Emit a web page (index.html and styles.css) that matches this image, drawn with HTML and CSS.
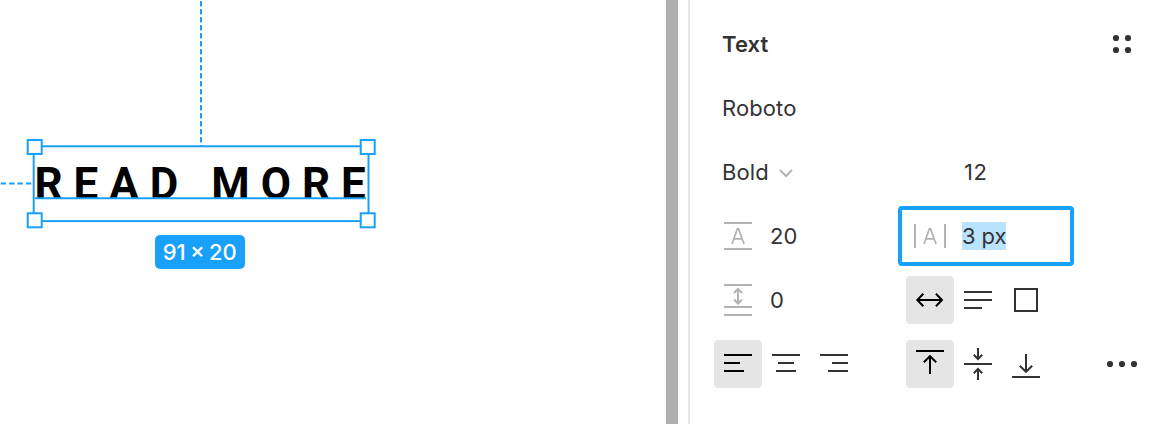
FILE: index.html
```html
<!DOCTYPE html>
<html lang="en">
<head>
<meta charset="utf-8">
<title>Text properties</title>
<link rel="stylesheet" href="styles.css">
</head>
<body>
<div class="app">
  <main class="canvas">
    <svg class="guides" width="666" height="424" fill="none" stroke="#18a0fb" stroke-width="2">
      <path d="M201 1V146" stroke-dasharray="5.5 2.5"/>
      <path d="M0.7 183.6H34" stroke-dasharray="5.4 3"/>
    </svg>
    <div class="layer-text">READ MORE</div>
    <svg class="guides" width="666" height="424" fill="#fff" stroke="#18a0fb" stroke-width="2">
      <path d="M35 198.3H366"/>
      <rect x="33.7" y="146.3" width="334.8" height="74.8" fill="none"/>
      <rect x="27.7" y="140" width="14" height="14"/>
      <rect x="360.7" y="140" width="14" height="14"/>
      <rect x="27.7" y="213.3" width="14" height="14"/>
      <rect x="360.7" y="213.3" width="14" height="14"/>
    </svg>
    <div class="size-badge">91 × 20</div>
  </main>
  <div class="scrollbar"></div>
  <aside class="panel">
    <div class="row">
      <h2 class="label wide title">Text</h2>
      <svg class="icon last" viewBox="0 0 48 48" fill="#333"><circle cx="18" cy="18" r="3.1"/><circle cx="30" cy="18" r="3.1"/><circle cx="18" cy="30" r="3.1"/><circle cx="30" cy="30" r="3.1"/></svg>
    </div>
    <div class="row"><span class="label wide">Roboto</span></div>
    <div class="row">
      <span class="label wide">Bold<svg class="chevron" width="14" height="10" viewBox="0 0 14 10"><path d="M1 1L7 7L13 1"/></svg></span>
      <span class="label size">12</span>
    </div>
    <div class="row">
      <svg class="icon muted" viewBox="0 0 48 48"><path d="M10 11H38M10 37H38"/><path class="thin" d="M18 32L23.4 16.8H24.6L30 32M19.8 26.8H28.2"/></svg>
      <span class="label value">20</span>
      <div class="field">
        <svg class="icon muted" viewBox="0 0 48 48"><path d="M9 12V36M39 12V36"/><path class="thin" d="M18 32L23.4 16.8H24.6L30 32M19.8 26.8H28.2"/></svg>
        <span class="selected">3 px</span>
      </div>
    </div>
    <div class="row">
      <svg class="icon muted" viewBox="0 0 48 48"><path d="M10 9H38M10 31H38M10 39H38M24 13V27M20 17L24 13L28 17M20 23.5L24 27.5L28 23.5"/></svg>
      <span class="label value">0</span>
      <svg class="icon second active" viewBox="0 0 48 48"><path d="M11.5 24H36M17.3 17.7L11.3 24L17.3 30.3M29.9 17.7L36 24L29.9 30.3"/></svg>
      <svg class="icon" viewBox="0 0 48 48"><path d="M10 16H38M10 24H38M10 32H28"/></svg>
      <svg class="icon" viewBox="0 0 48 48"><path d="M13 13H35V35H13Z"/></svg>
    </div>
    <div class="row">
      <svg class="icon active" viewBox="0 0 48 48"><path d="M10 15H38M10 23H26M10 31H30"/></svg>
      <svg class="icon" viewBox="0 0 48 48"><path d="M10 15H38M16 23H32M14 31H34"/></svg>
      <svg class="icon" viewBox="0 0 48 48"><path d="M10 15H38M22 23H38M18 31H38"/></svg>
      <svg class="icon second active" viewBox="0 0 48 48"><path d="M10 11H38M24 34V16.2M17.8 22.2L24 16.2L30.2 22.2"/></svg>
      <svg class="icon" viewBox="0 0 48 48"><path d="M10 24H38M24 8V19M19.8 14.8L24 19L28.2 14.8M24 40V29M19.8 33.2L24 29L28.2 33.2"/></svg>
      <svg class="icon" viewBox="0 0 48 48"><path d="M10 37H38M24 14V31.8M17.8 25.8L24 31.8L30.2 25.8"/></svg>
      <svg class="icon last" viewBox="0 0 48 48" fill="#333"><circle cx="12" cy="24" r="3.1"/><circle cx="24" cy="24" r="3.1"/><circle cx="36" cy="24" r="3.1"/></svg>
    </div>
  </aside>
</div>
</body>
</html>
```
FILE: styles.css
```css
* { box-sizing: border-box; }
body { margin: 0; background: #fff; font-family: Inter, sans-serif; font-size: 22px; color: #333; }
.app { display: flex; height: 424px; overflow: hidden; }
.canvas { position: relative; width: 666px; }
.guides { position: absolute; top: 0; left: 0; }
.layer-text {
  position: absolute; left: 34.5px; top: 147px;
  font: 700 43.9px/74px Roboto, sans-serif;
  letter-spacing: 11px; white-space: nowrap; color: #000;
}
.size-badge {
  position: absolute; left: 154.5px; top: 234.5px; width: 90.5px; height: 34px;
  border-radius: 5px; background: #18a0fb; color: #fff;
  font-weight: 500; line-height: 34px; text-align: center; white-space: nowrap;
  word-spacing: -1.5px;
}
.scrollbar { width: 12px; margin-right: 10px; background: #afafaf; }
.panel { flex: 1; padding: 12px 0 0 24px; border-left: 2px solid #e5e5e5; }
.row { display: grid; grid-template-columns: repeat(9, 48px); height: 64px; align-items: center; }
.label { padding-left: 8px; line-height: 28px; letter-spacing: 0.1px; white-space: nowrap; }
.title { margin: 0; font-size: 22px; font-weight: 600; }
.wide { grid-column: 1 / span 4; }
.size { grid-column: 6 / span 3; padding-left: 10px; letter-spacing: 0.5px; }
.value { grid-column: 2 / span 3; }
.second { grid-column: 5; }
.last { grid-column: 9; }
.icon { width: 48px; height: 48px; flex: none; fill: none; stroke: #333; stroke-width: 2; border-radius: 4px; }
.last { fill: #333; stroke: none; }
.muted { stroke: #b3b3b3; }
.thin { stroke-width: 1.8; }
.active { background: #e5e5e5; stroke: #000; }
.chevron { margin-left: 10px; fill: none; stroke: #b3b3b3; stroke-width: 2; vertical-align: 1px; }
.field {
  grid-column: 5 / span 4; display: flex; align-items: center;
  width: 176px; height: 60px; margin-left: -8px; padding-left: 4px;
  border: 4px solid #18a0fb; border-radius: 4px;
}
.selected { margin-left: 8px; line-height: 28px; letter-spacing: -0.1px; background: #bae3ff; white-space: nowrap; }
```
